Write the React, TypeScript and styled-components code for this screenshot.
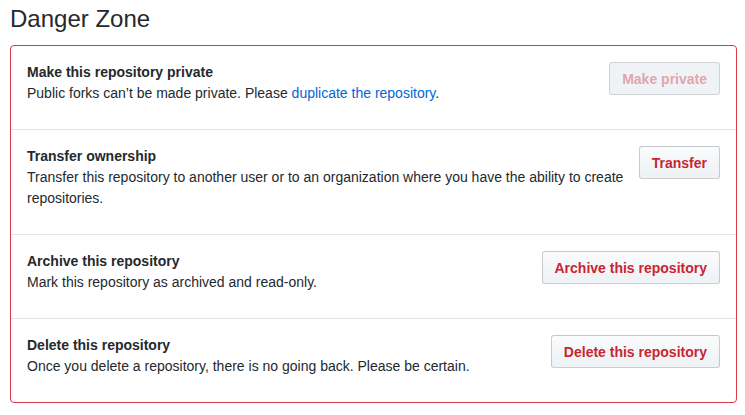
import type { ReactNode } from "react";
import styled, { createGlobalStyle } from "styled-components";

const GlobalStyle = createGlobalStyle`
  body {
    margin: 0;
    background: #ffffff;
    font-family: "Liberation Sans", Arial, sans-serif;
    color: #24292e;
  }
`;

const Page = styled.div`
  padding: 4px 8px 0 10px;
`;

const Heading = styled.h2`
  margin: 0 0 11px;
  font-size: 24px;
  font-weight: 400;
  line-height: 30px;
`;

const Box = styled.div`
  border: 1px solid #d73a49;
  border-radius: 4px;
`;

const Row = styled.div`
  display: flex;
  align-items: flex-start;
  justify-content: space-between;
  gap: 8px;
  padding: 16px;
  border-top: 1px solid #e1e4e8;

  &:first-child {
    border-top: none;
  }
`;

const Texts = styled.div`
  flex: 1;
  font-size: 14px;
  line-height: 21px;
  padding-bottom: 9px;
`;

const Title = styled.div`
  font-weight: bold;
`;

const Desc = styled.p`
  margin: 0;
`;

const Link = styled.a`
  color: #0366d6;
  text-decoration: none;
`;

const DangerButton = styled.button`
  flex-shrink: 0;
  height: 33px;
  padding: 0 12px;
  font-family: inherit;
  font-size: 14px;
  font-weight: bold;
  line-height: 20px;
  color: #cb2431;
  background: linear-gradient(-180deg, #fafbfc 0%, #eff3f6 90%);
  border: 1px solid rgba(27, 31, 35, 0.2);
  border-radius: 3px;
  cursor: pointer;

  &:disabled {
    color: rgba(203, 36, 49, 0.4);
    background: #eff3f6;
    border-color: rgba(27, 31, 35, 0.15);
    cursor: default;
  }
`;

type Item = {
  title: string;
  desc: ReactNode;
  action: string;
  disabled?: boolean;
};

const items: Item[] = [
  {
    title: "Make this repository private",
    desc: (
      <>
        Public forks can’t be made private. Please{" "}
        <Link href="#">duplicate the repository</Link>.
      </>
    ),
    action: "Make private",
    disabled: true,
  },
  {
    title: "Transfer ownership",
    desc: "Transfer this repository to another user or to an organization where you have the ability to create repositories.",
    action: "Transfer",
  },
  {
    title: "Archive this repository",
    desc: "Mark this repository as archived and read-only.",
    action: "Archive this repository",
  },
  {
    title: "Delete this repository",
    desc: "Once you delete a repository, there is no going back. Please be certain.",
    action: "Delete this repository",
  },
];

const App = () => {
  return (
    <>
      <GlobalStyle />
      <Page>
        <Heading>Danger Zone</Heading>
        <Box>
          {items.map((item) => (
            <Row key={item.title}>
              <Texts>
                <Title>{item.title}</Title>
                <Desc>{item.desc}</Desc>
              </Texts>
              <DangerButton disabled={item.disabled}>{item.action}</DangerButton>
            </Row>
          ))}
        </Box>
      </Page>
    </>
  );
};

export default App;
